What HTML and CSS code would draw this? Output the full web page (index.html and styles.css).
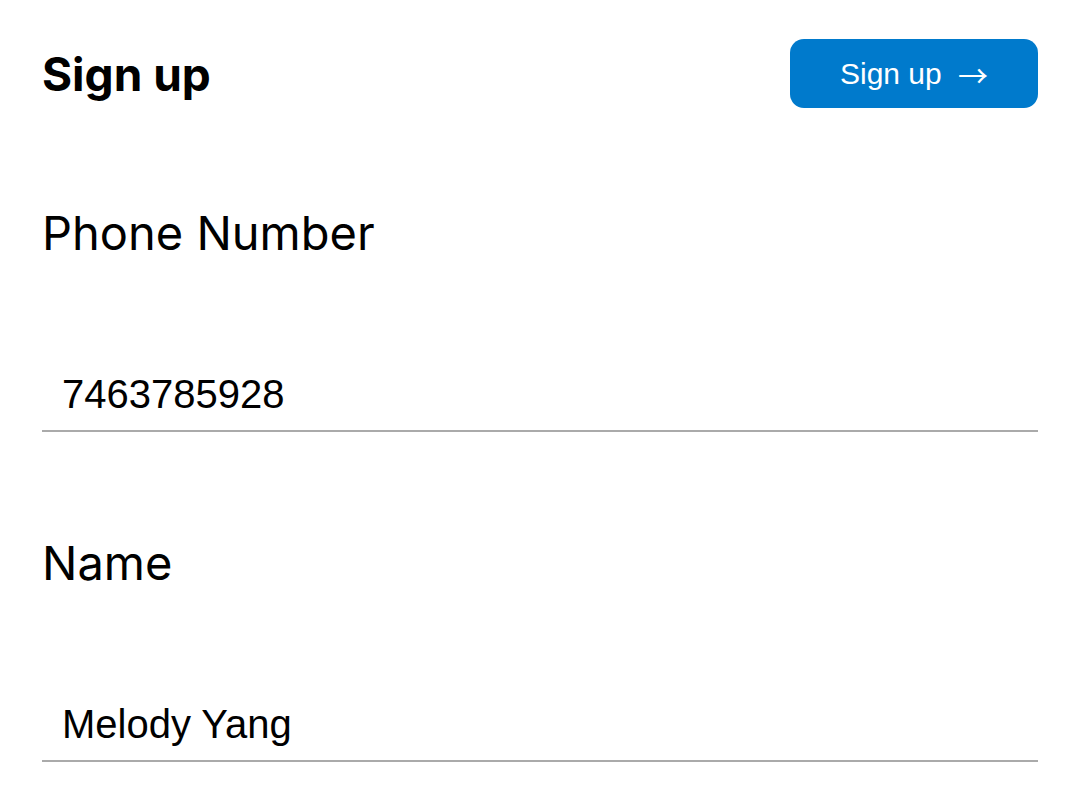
FILE: index.html
```html
<!DOCTYPE html>
<html>
<head>
<meta charset="utf-8">
<link rel="stylesheet" href="styles.css">
</head>
<body>
<div class="page">
  <header class="header">
    <h1 class="title">Sign up</h1>
    <button class="btn">Sign up <span class="arrow">→</span></button>
  </header>
  <div class="fields">
    <div class="field">
      <label class="label">Phone Number</label>
      <div class="input">7463785928</div>
    </div>
    <div class="field">
      <label class="label">Name</label>
      <div class="input">Melody Yang</div>
    </div>
  </div>
</div>
</body>
</html>
```
FILE: styles.css
```css
html, body {
  margin: 0;
  background: #fff;
}
.page {
  padding: 39px 34px 0 42px;
  font-family: Inter, "Liberation Sans", sans-serif;
  color: #000;
}
.header {
  display: flex;
  justify-content: space-between;
  align-items: center;
  height: 69px;
}
.title {
  margin: 0;
  font-size: 46px;
  font-weight: 700;
  line-height: 1;
}
.btn {
  width: 248px;
  height: 69px;
  border: none;
  border-radius: 14px;
  background: #007acc;
  color: #fff;
  font-family: "Liberation Sans", Arial, sans-serif;
  font-size: 30px;
  line-height: 34px;
  padding: 0;
}
.arrow {
  font-family: "Noto Sans CJK JP", "DejaVu Sans", sans-serif;
  line-height: 1;
  margin-left: 8px;
  vertical-align: -3px;
}
.fields {
  display: flex;
  flex-direction: column;
  gap: 102px;
  margin-top: 96px;
}
.field {
  display: flex;
  flex-direction: column;
}
.label {
  font-size: 47px;
  line-height: 57px;
}
.input {
  margin-top: 110px;
  padding: 0 0 13px 20px;
  font-family: "Liberation Sans", Arial, sans-serif;
  font-size: 40px;
  line-height: 46px;
  border-bottom: 2px solid #aaa;
}
```
